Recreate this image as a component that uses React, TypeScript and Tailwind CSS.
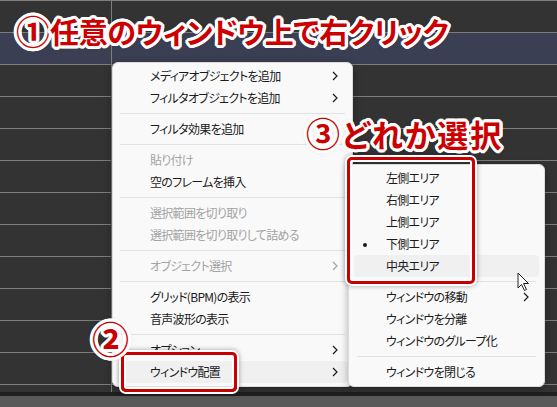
import React from "react";

type Entry =
  | "sep"
  | { label: string; disabled?: boolean; arrow?: boolean; active?: boolean; dot?: boolean };

const mainMenu: Entry[] = [
  { label: "メディアオブジェクトを追加", arrow: true },
  { label: "フィルタオブジェクトを追加", arrow: true },
  "sep",
  { label: "フィルタ効果を追加" },
  "sep",
  { label: "貼り付け", disabled: true },
  { label: "空のフレームを挿入" },
  "sep",
  { label: "選択範囲を切り取り", disabled: true },
  { label: "選択範囲を切り取りして詰める", disabled: true },
  "sep",
  { label: "オブジェクト選択", disabled: true, arrow: true },
  "sep",
  { label: "グリッド(BPM)の表示" },
  { label: "音声波形の表示" },
  "sep",
  { label: "オプション", arrow: true },
  { label: "ウィンドウ配置", arrow: true, active: true },
];

const subMenu: Entry[] = [
  { label: "左側エリア" },
  { label: "右側エリア" },
  { label: "上側エリア" },
  { label: "下側エリア", dot: true },
  { label: "中央エリア", active: true },
  "sep",
  { label: "ウィンドウの移動", arrow: true },
  { label: "ウィンドウを分離" },
  { label: "ウィンドウのグループ化" },
  "sep",
  { label: "ウィンドウを閉じる" },
];

function Chevron() {
  return (
    <svg width="6" height="10" viewBox="0 0 6 10" className="shrink-0">
      <path d="M1 1 L5 5 L1 9" fill="none" stroke="currentColor" strokeWidth="1.2" />
    </svg>
  );
}

function MenuList({ items, textLeft, hlInset, sepInset }: { items: Entry[]; textLeft: string; hlInset: string; sepInset: string }) {
  return (
    <div className="flex flex-col pt-[2px] pb-[3px]">
      {items.map((it, i) =>
        it === "sep" ? (
          <div key={i} className="flex h-[9px] items-center">
            <div className={`h-px flex-1 bg-[#e2e2e2] ${sepInset}`} />
          </div>
        ) : (
          <div
            key={i}
            className={`relative flex h-[22px] items-center rounded-[4px] pr-[10px] ${hlInset} ${
              it.active ? "bg-[#f0f0f0]" : ""
            } ${it.disabled ? "text-[#a3a3a3]" : "text-[#1b1b1b]"}`}
          >
            {it.dot && <span className="absolute left-[9px] top-[10px] h-[4px] w-[4px] rounded-full bg-[#1b1b1b]" />}
            <span className={`flex-1 tracking-[-0.7px] ${textLeft}`}>{it.label}</span>
            {it.arrow && <Chevron />}
          </div>
        )
      )}
    </div>
  );
}

// white halo around the red callout lettering
const outline =
  "[text-shadow:3px_0_0_#fff,-3px_0_0_#fff,0_3px_0_#fff,0_-3px_0_#fff,2px_2px_0_#fff,-2px_2px_0_#fff,2px_-2px_0_#fff,-2px_-2px_0_#fff,3px_1px_0_#fff,3px_-1px_0_#fff,-3px_1px_0_#fff,-3px_-1px_0_#fff,1px_3px_0_#fff,-1px_3px_0_#fff,1px_-3px_0_#fff,-1px_-3px_0_#fff,0_0_5px_rgba(0,0,0,0.45)]";

const rows = [0, 1, 2, 3, 4, 5, 6, 7, 8, 9, 10, 11];

export default function App() {
  return (
    <div className="relative h-[407px] w-[557px] overflow-hidden bg-[#333333] font-['Noto_Sans_CJK_JP',sans-serif] [font-feature-settings:'palt']">
      {/* timeline rows */}
      <div className="flex h-full flex-col">
        {rows.map((r) => (
          <div key={r} className={`flex h-8 shrink-0 border-t border-[#7d7d7d] ${r === 1 ? "bg-[#3b3f53]" : ""}`}>
            <div className="w-[112px] border-r border-[#7d7d7d]" />
            <div className="flex-1" />
          </div>
        ))}
        <div className="flex h-[8px] shrink-0 border-t border-[#7d7d7d]">
          <div className="w-[112px] border-r border-[#7d7d7d]" />
        </div>
        <div className="h-[4px] shrink-0 bg-[#1f1f1f]" />
        <div className="flex-1 bg-[#595959]" />
      </div>

      {/* context menu */}
      <div className="absolute left-[112px] top-[62px] w-[241px] rounded-[6px] border border-[#dcdcdc] bg-[#f9f9f9] text-[12px] shadow-[0_2px_8px_rgba(0,0,0,0.3)]">
        <MenuList items={mainMenu} textLeft="pl-[33px]" hlInset="mx-[4px]" sepInset="mx-[7px]" />
      </div>

      {/* window placement submenu */}
      <div className="absolute left-[348px] top-[164px] w-[197px] rounded-[6px] border border-[#dcdcdc] bg-[#f9f9f9] text-[12px] shadow-[0_2px_8px_rgba(0,0,0,0.3)]">
        <MenuList items={subMenu} textLeft="pl-[32px]" hlInset="mx-[5px]" sepInset="mx-[8px]" />
      </div>

      {/* pointer */}
      <svg className="absolute left-[517px] top-[272px]" width="13" height="20" viewBox="0 0 13 20">
        <path d="M1 1 L1 16 L4.5 12.5 L7.5 18.5 L9.5 17.5 L6.5 11.5 L11.5 11.5 Z" fill="#fff" stroke="#222" strokeWidth="1" strokeLinejoin="round" />
      </svg>

      {/* callouts */}
      <div className="absolute left-[121px] top-[352px] h-[40px] w-[116px] rounded-[5px] border-[3px] border-[#c80000] shadow-[0_0_0_2px_#fff,inset_0_0_0_2px_#fff,0_0_5px_2px_rgba(0,0,0,0.35)]" />
      <div className="absolute left-[347px] top-[157px] h-[127px] w-[128px] rounded-[5px] border-[3px] border-[#c80000] shadow-[0_0_0_2px_#fff,inset_0_0_0_2px_#fff,0_0_5px_2px_rgba(0,0,0,0.35)]" />

      <div className={`absolute left-[16px] top-[14px] flex items-center whitespace-nowrap text-[29px] font-bold leading-none text-[#cc0000] ${outline}`}>
        <span className="text-[34px]">①</span>
        <span className="tracking-[-0.3px]">任意のウィンドウ上で右クリック</span>
      </div>
      <div className={`absolute left-[306px] top-[116px] flex items-center whitespace-nowrap text-[31px] font-bold leading-none tracking-[2px] text-[#cc0000] ${outline}`}>
        <span className="text-[34px]">③</span>
        <span>どれか選択</span>
      </div>
      <div className={`absolute left-[92px] top-[320px] text-[37px] font-bold leading-none text-[#cc0000] ${outline}`}>
        ②
      </div>
    </div>
  );
}
